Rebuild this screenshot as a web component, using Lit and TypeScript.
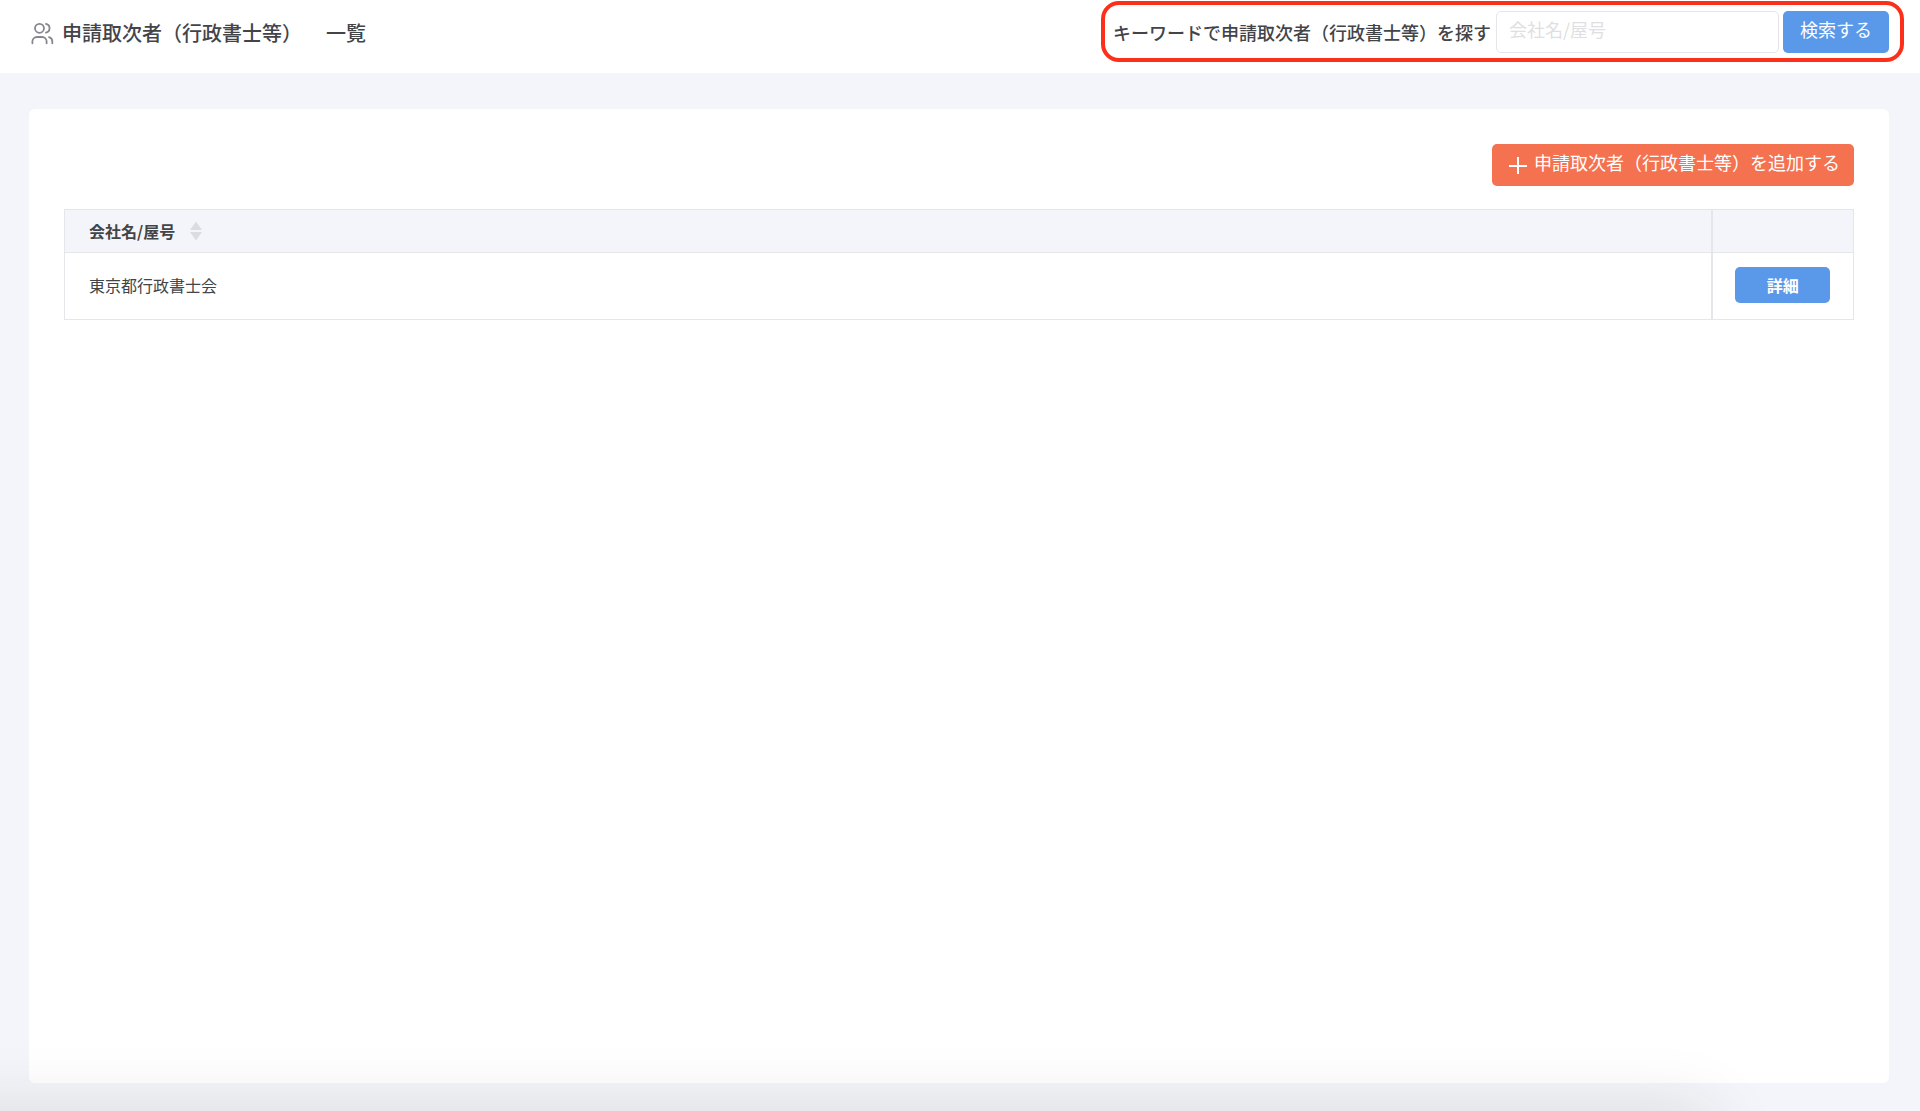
import { LitElement, html, css } from "lit";
import { customElement, state } from "lit/decorators.js";

interface Agent {
  id: number;
  name: string;
}

@customElement("app-root")
export class AppRoot extends LitElement {
  static styles = css`
    :host {
      position: relative;
      display: flex;
      flex-direction: column;
      min-height: 100vh;
      overflow: hidden;
      background: #f4f5fa;
      color: #434448;
      font-family: "Noto Sans CJK JP", "Noto Sans", sans-serif;
      font-size: 16px;
    }
    *,
    *::before {
      box-sizing: border-box;
    }
    button,
    input {
      margin: 0;
      font-family: inherit;
    }
    button {
      border: 0;
      cursor: pointer;
    }
    .header {
      display: flex;
      justify-content: space-between;
      align-items: flex-start;
      height: 73px;
      padding: 1px 16px 0 30px;
      background: #ffffff;
    }
    .heading {
      display: flex;
      align-items: center;
      gap: 8px;
      height: 64px;
    }
    .people {
      width: 24px;
      height: 24px;
      color: #85868f;
    }
    .title {
      display: flex;
      gap: 24px;
      margin: 0;
      font-size: 20px;
      line-height: 28px;
      font-weight: 500;
    }
    .search {
      display: flex;
      align-items: center;
      padding: 6px 11px 5px 8px;
      border: 4px solid #fc2f1a;
      border-radius: 18px;
    }
    .label {
      margin-right: 5px;
      font-size: 18px;
      line-height: 28px;
      font-weight: 500;
    }
    .keyword {
      width: 283px;
      height: 42px;
      margin-right: 4px;
      padding: 0 12px 6px;
      border: 1px solid #e6e6ea;
      border-radius: 5px;
      background: #ffffff;
      color: inherit;
      font-size: 18px;
    }
    .keyword::placeholder {
      color: #dfdfe3;
      opacity: 1;
    }
    .submit,
    .add {
      display: flex;
      align-items: center;
      justify-content: center;
      height: 42px;
      border-radius: 5px;
      color: #ffffff;
      font-size: 18px;
      line-height: 28px;
    }
    .submit {
      width: 106px;
      padding: 0 0 6px;
      background: #5a98ea;
    }
    .card {
      flex: 1;
      margin: 36px 31px 28px 29px;
      padding: 35px;
      border-radius: 6px;
      background: #ffffff;
    }
    .actions {
      display: flex;
      justify-content: flex-end;
      margin-bottom: 23px;
    }
    .add {
      gap: 6px;
      padding: 0 14px 0 16px;
      background: #f4724f;
    }
    .add-text {
      padding-bottom: 6px;
    }
    .plus {
      width: 20px;
      height: 20px;
    }
    .table {
      width: 100%;
      border-collapse: collapse;
      border: 1px solid #e6e6ea;
    }
    .head {
      height: 43px;
      padding: 0 24px;
      border-bottom: 1px solid #e6e6ea;
      background: #f4f5fa;
      text-align: left;
      font-weight: 700;
    }
    .cell {
      height: 67px;
      padding: 0 24px 2px;
    }
    .narrow {
      width: 142px;
      padding: 0 0 2px;
      border-left: 2px solid #e6e6ea;
      text-align: center;
    }
    .sort {
      display: inline-flex;
      align-items: center;
      gap: 15px;
      padding: 0;
      background: none;
      color: inherit;
      font-size: 16px;
      line-height: 24px;
      font-weight: 700;
    }
    .arrows {
      width: 12px;
      height: 20px;
      color: #dcdce0;
    }
    .detail {
      width: 95px;
      height: 36px;
      padding: 0;
      border-radius: 5px;
      background: #5a98ea;
      color: #ffffff;
      font-size: 16px;
      font-weight: 700;
      vertical-align: middle;
    }
    .shade {
      position: absolute;
      top: 100%;
      left: -80px;
      right: 210px;
      height: 80px;
      box-shadow: 0 0 70px rgba(40, 36, 10, 0.13);
      pointer-events: none;
    }
  `;

  @state() private agents: Agent[] = [{ id: 1, name: "東京都行政書士会" }];
  @state() private keyword = "";
  @state() private ascending = true;

  private onSubmit(event: Event) {
    event.preventDefault();
    const input = this.renderRoot.querySelector<HTMLInputElement>("#keyword");
    this.keyword = input?.value.trim() ?? "";
  }

  private toggleSort() {
    this.ascending = !this.ascending;
  }

  private get rows(): Agent[] {
    const direction = this.ascending ? 1 : -1;
    return this.agents
      .filter((agent) => agent.name.includes(this.keyword))
      .sort((a, b) => direction * a.name.localeCompare(b.name, "ja"));
  }

  render() {
    return html`
      <header class="header">
        <div class="heading">
          <svg
            class="people"
            viewBox="0 0 24 24"
            fill="none"
            stroke="currentColor"
            stroke-width="1.8"
            stroke-linecap="round"
            aria-hidden="true"
          >
            <circle cx="9.5" cy="7.3" r="4.5" />
            <path d="M2.4 22.3v-1.8a4.5 4.5 0 0 1 4.5-4.5h5.2a4.5 4.5 0 0 1 4.5 4.5v1.8" />
            <path d="M16 2.9a4.5 4.5 0 0 1 0 8.8" />
            <path d="M19 16.1a4.5 4.5 0 0 1 3.3 4.4v1.8" />
          </svg>
          <h1 class="title">
            <span>申請取次者（行政書士等）</span><span>一覧</span>
          </h1>
        </div>
        <form class="search" role="search" @submit=${this.onSubmit}>
          <label class="label" for="keyword"
            >キーワードで申請取次者（行政書士等）を探す</label
          >
          <input class="keyword" id="keyword" type="text" placeholder="会社名/屋号" />
          <button class="submit" type="submit">検索する</button>
        </form>
      </header>
      <main class="card">
        <div class="actions">
          <button class="add" type="button">
            <svg
              class="plus"
              viewBox="0 0 20 20"
              fill="none"
              stroke="currentColor"
              stroke-width="2"
              aria-hidden="true"
            >
              <path d="M10 2v17M1 11h18" />
            </svg>
            <span class="add-text">申請取次者（行政書士等）を追加する</span>
          </button>
        </div>
        <table class="table">
          <thead>
            <tr>
              <th class="head" scope="col">
                <button class="sort" type="button" @click=${this.toggleSort}>
                  会社名/屋号
                  <svg class="arrows" viewBox="0 0 12 20" fill="currentColor" aria-hidden="true">
                    <path d="M6 0.5 12 9H0zM0 11h12L6 19.5z" />
                  </svg>
                </button>
              </th>
              <td class="head narrow"></td>
            </tr>
          </thead>
          <tbody>
            ${this.rows.map(
              (agent) => html`
                <tr>
                  <td class="cell">${agent.name}</td>
                  <td class="cell narrow">
                    <button class="detail" type="button">詳細</button>
                  </td>
                </tr>
              `
            )}
          </tbody>
        </table>
      </main>
      <div class="shade"></div>
    `;
  }
}
